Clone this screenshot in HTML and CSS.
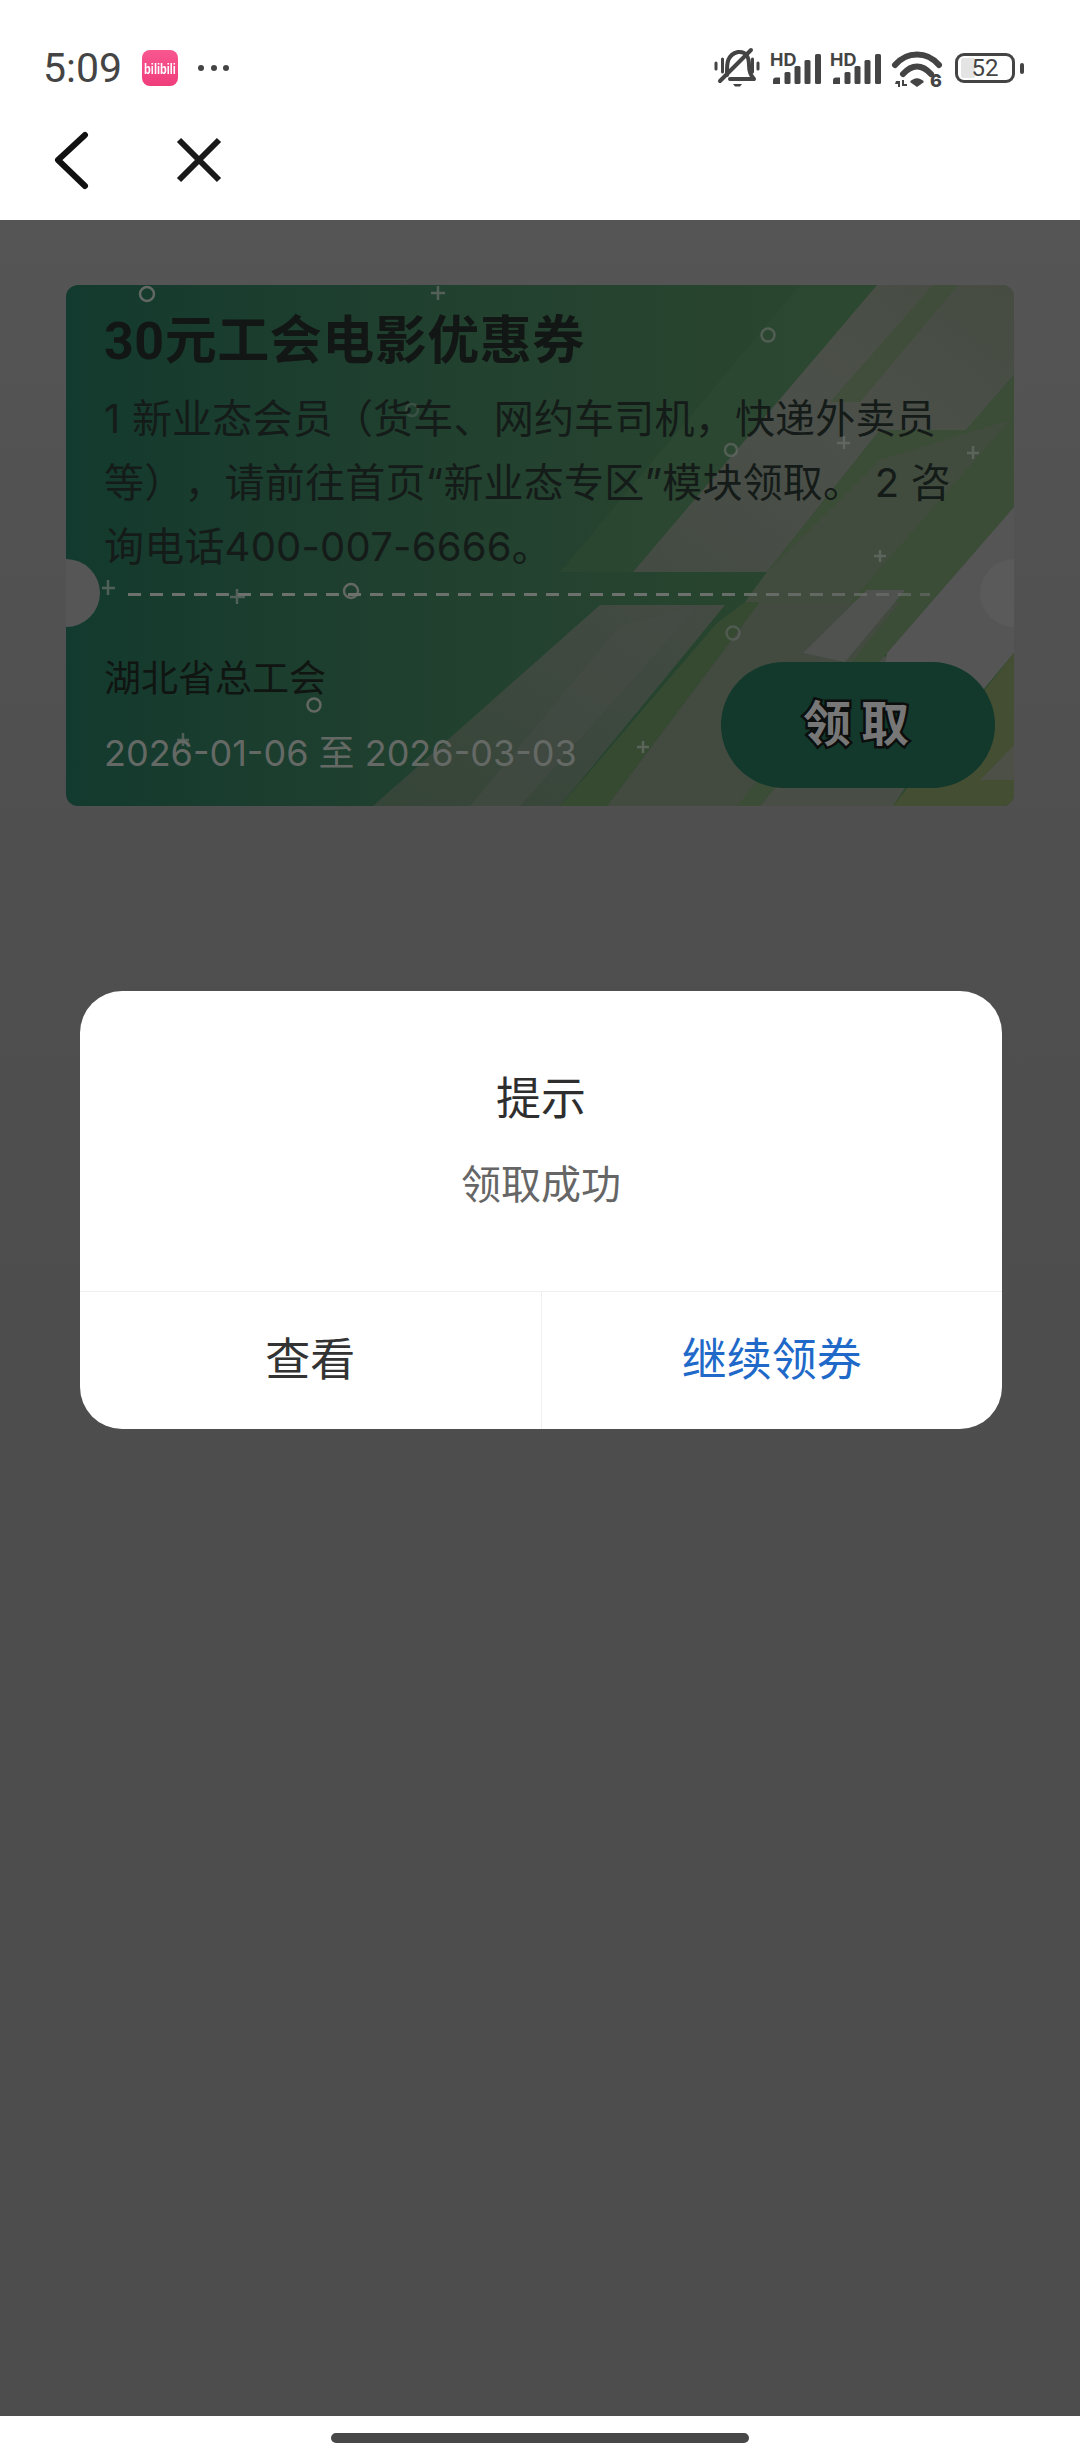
FILE: index.html
```html
<!DOCTYPE html>
<html lang="zh-CN">
<head>
<meta charset="utf-8">
<title>领取成功</title>
<link rel="stylesheet" href="styles.css">
</head>
<body>
<div class="page">
  <header class="top">
    <div class="status">
      <div class="status-left">
        <span class="time">5:09</span>
        <span class="app-icon"><span class="app-name">bilibili</span></span>
        <span class="dots"><i></i><i></i><i></i></span>
      </div>
      <div class="status-right">
        <svg class="ic-bell" viewBox="712 48 50 42">
          <path d="M727 76C727 66 726 56 738 53C746 52 749 58 749 66C749 73 751 77 754 80H730" fill="none" stroke="#444" stroke-width="4" stroke-linejoin="round" stroke-linecap="round"/>
          <path d="M720 82L751 51" stroke="#444" stroke-width="4" stroke-linecap="round"/>
          <path d="M733 85h9l-2 2.500h-5z" fill="#444"/>
          <path d="M716 64v6M722.500 60v13M752.500 60v13M758 64v6" stroke="#444" stroke-width="3" stroke-linecap="round"/>
        </svg>
        <svg class="ic-signal" viewBox="770 50 52 36">
          <text class="hd" x="770" y="66">HD</text>
          <path d="M773 80.500a3 3 0 0 1 3-3h4v6.500h-7z" fill="#444"/>
          <rect x="784.500" y="72" width="6" height="12" rx="1.500" fill="#444"/>
          <rect x="794.500" y="66" width="6" height="18" rx="1.500" fill="#444"/>
          <rect x="804.500" y="60" width="6" height="24" rx="1.500" fill="#444"/>
          <rect x="815" y="54" width="6" height="30" rx="1.500" fill="#444"/>
        </svg>
        <svg class="ic-signal" viewBox="770 50 52 36">
          <text class="hd" x="770" y="66">HD</text>
          <path d="M773 80.500a3 3 0 0 1 3-3h4v6.500h-7z" fill="#444"/>
          <rect x="784.500" y="72" width="6" height="12" rx="1.500" fill="#444"/>
          <rect x="794.500" y="66" width="6" height="18" rx="1.500" fill="#444"/>
          <rect x="804.500" y="60" width="6" height="24" rx="1.500" fill="#444"/>
          <rect x="815" y="54" width="6" height="30" rx="1.500" fill="#444"/>
        </svg>
        <svg class="ic-wifi" viewBox="892 48 50 40">
          <path d="M895 65C907 51 927 51 939 65" fill="none" stroke="#444" stroke-width="6" stroke-linecap="round"/>
          <path d="M903 74C912 64 922 64 931 74" fill="none" stroke="#444" stroke-width="6" stroke-linecap="round"/>
          <path d="M910 82C914 77 920 77 924 82L917 87z" fill="#444"/>
          <path d="M896 81h4v6h-2v-3h-3zM902 80h2v4h3v2h-5z" fill="#444"/>
          <text class="six" x="930" y="87">6</text>
        </svg>
        <div class="battery">
          <div class="battery-box"><span class="battery-fill"></span><span class="battery-num">52</span></div>
          <span class="battery-nub"></span>
        </div>
      </div>
    </div>
    <nav class="nav">
      <svg class="ic-back" viewBox="0 0 36 60"><path d="M31 5L4 30L31 56" fill="none" stroke="#111" stroke-width="6" stroke-linecap="round" stroke-linejoin="round"/></svg>
      <svg class="ic-close" viewBox="0 0 48 48"><path d="M4 4L44 44M44 4L4 44" fill="none" stroke="#1a1a1a" stroke-width="6"/></svg>
    </nav>
  </header>

  <main class="main">
    <section class="coupon">
      <svg class="coupon-art" viewBox="66 285 948 521" preserveAspectRatio="none">
        <defs>
          <linearGradient id="base" x1="0" y1="0" x2="1" y2="0">
            <stop offset="0" stop-color="#133a2e"/>
            <stop offset=".35" stop-color="#20402f"/>
            <stop offset=".75" stop-color="#29452f"/>
            <stop offset="1" stop-color="#2e4a2f"/>
          </linearGradient>
          <linearGradient id="greyA" x1="0" y1="1" x2="1" y2="0">
            <stop offset="0" stop-color="#434b42"/>
            <stop offset=".5" stop-color="#4c504a"/>
            <stop offset="1" stop-color="#464c42"/>
          </linearGradient>
          <linearGradient id="greyB" x1="0" y1="1" x2="1" y2="0">
            <stop offset="0" stop-color="#354538"/>
            <stop offset="1" stop-color="#444b43"/>
          </linearGradient>
        </defs>
        <rect x="66" y="285" width="948" height="521" fill="url(#base)"/>
        <polygon points="800,285 877,285 633,572 560,572" fill="#2f4933" opacity=".6"/>
        <polygon points="877,285 1014,285 1014,375 966,430 880,430 767,572 633,572" fill="url(#greyA)"/>
        <polygon points="933,285 958,285 860,402 830,402" fill="#3e4e38" opacity=".8"/>
        <polygon points="880,430 966,430 1014,375 1014,507 887,653 760,806 737,806 745,602 767,572" fill="#3c4d37"/>
        <polygon points="880,460 1010,420 905,540 830,625 745,602 767,572" fill="#414c3e"/>
        <polygon points="600,605 725,605 560,806 373,806" fill="url(#greyB)"/>
        <polygon points="470,806 620,625 700,605 520,806" fill="#464c45" opacity=".5"/>
        <polygon points="717,623 745,602 760,602 607,806 560,806" fill="#364a32"/>
        <polygon points="760,602 900,602 737,806 607,806" fill="#434b41"/>
        <polygon points="760,806 893,806 970,690 884,656" fill="#484e46"/>
        <polygon points="803,653 867,590 905,590 845,662" fill="#4f524f"/>
        <polygon points="887,653 1014,507 1014,653 983,690 880,690" fill="#545554"/>
        <polygon points="893,806 1014,653 1014,806" fill="#434e32"/>
        <polygon points="980,780 1014,745 1014,780" fill="#4d5046"/>
        <g fill="none" stroke="#636864" stroke-width="2.500">
          <circle cx="147" cy="294" r="7"/>
          <circle cx="768" cy="335" r="6.500" opacity=".7"/>
          <circle cx="731" cy="450" r="6" opacity=".7"/>
          <circle cx="412" cy="410" r="6" opacity=".4"/>
          <circle cx="351" cy="591" r="7"/>
          <circle cx="314" cy="705" r="6.500"/>
          <circle cx="733" cy="633" r="6.500" opacity=".6"/>
        </g>
        <g stroke="#6a6f6a" stroke-width="2.500" opacity=".7">
          <path d="M431 293h14M438 286v14"/>
          <path d="M102 588h13M108 580v15"/>
          <path d="M230 597h15M237 589v15"/>
          <path d="M837 443h13M844 436v13"/>
          <path d="M967 453h12M973 446v13"/>
          <path d="M874 556h12M880 550v12"/>
          <path d="M637 747h12M643 741v12"/>
          <path d="M177 740h12M183 733v13"/>
        </g>
      </svg>
      <span class="notch notch-left"></span>
      <span class="notch notch-right"></span>
      <div class="coupon-head">
        <h1 class="coupon-title">30元工会电影优惠券</h1>
        <p class="coupon-desc">1 新业态会员（货车、网约车司机，快递外卖员等），请前往首页“新业态专区”模块领取。 2 咨询电话400-007-6666。</p>
      </div>
      <div class="dash"></div>
      <div class="coupon-foot">
        <div class="coupon-meta">
          <div class="coupon-org">湖北省总工会</div>
          <div class="coupon-date">2026-01-06 至 2026-03-03</div>
        </div>
        <button class="coupon-btn">领取</button>
      </div>
    </section>

    <section class="dialog">
      <div class="dialog-body">
        <div class="dialog-title">提示</div>
        <div class="dialog-text">领取成功</div>
      </div>
      <div class="dialog-actions">
        <div class="dialog-action">查看</div>
        <div class="dialog-action dialog-action-primary">继续领券</div>
      </div>
    </section>
  </main>

  <footer class="home"><span class="home-bar"></span></footer>
</div>
</body>
</html>
```

FILE: styles.css
```css
* { box-sizing: border-box; }
html, body { margin: 0; padding: 0; }
body {
  width: 1080px;
  height: 2460px;
  overflow: hidden;
  background: #fff;
  font-family: Roboto, "Noto Sans CJK SC", sans-serif;
  text-spacing-trim: space-all;
}
.page { display: flex; flex-direction: column; height: 2460px; }

.top { height: 220px; background: #fff; }
.status {
  height: 112px;
  padding: 24px 56px 0 43px;
  display: flex;
  justify-content: space-between;
  align-items: center;
}
.status-left { display: flex; align-items: center; gap: 20px; }
.time { font-size: 41px; line-height: 44px; color: #444; width: 79px; }
.app-icon {
  width: 36px;
  height: 36px;
  border-radius: 8px;
  background: linear-gradient(180deg, #f8578f, #ef3d7b);
  display: flex;
  align-items: center;
  justify-content: center;
}
.app-name {
  font-family: "Liberation Sans", sans-serif;
  font-size: 11px;
  font-weight: 700;
  color: #fff;
  line-height: 12px;
  transform: scaleY(1.4);
}
.dots { display: flex; gap: 6.500px; }
.dots i { width: 6px; height: 6px; border-radius: 50%; background: #444; }

.status-right { display: flex; align-items: center; gap: 8px; }
.status-right svg { display: block; overflow: visible; }
.ic-bell { width: 50px; height: 42px; }
.ic-signal { width: 52px; height: 36px; }
.ic-wifi { width: 50px; height: 40px; margin-left: 2px; margin-right: 5px; }
.hd { font-family: Inter, sans-serif; font-size: 18px; font-weight: 700; fill: #444; }
.six { font-family: Inter, sans-serif; font-size: 18px; font-weight: 800; fill: #444; }
.battery { display: flex; align-items: center; gap: 5px; }
.battery-box {
  position: relative;
  width: 60px;
  height: 30px;
  border: 3.500px solid #444;
  border-radius: 9px;
  display: flex;
  align-items: center;
  justify-content: center;
}
.battery-fill {
  position: absolute;
  left: 3px;
  top: 2px;
  bottom: 2px;
  width: 14px;
  background: #e4e4e4;
  border-radius: 2px;
}
.battery-num { position: relative; font-size: 24px; line-height: 24px; color: #444; }
.battery-nub { width: 4px; height: 11px; border-radius: 2px; background: #444; }

.nav { display: flex; align-items: center; padding: 18px 0 0 54px; gap: 85px; }
.ic-back { width: 36px; height: 60px; display: block; }
.ic-close { width: 48px; height: 48px; display: block; }

.main {
  flex: 1;
  background: linear-gradient(180deg, #555 0, #505050 500px, #4e4e4e 900px, #4d4d4d 1400px);
  padding-top: 65px;
}

.coupon {
  position: relative;
  margin-left: 66px;
  width: 948px;
  height: 521px;
  border-radius: 12px;
  overflow: hidden;
}
.coupon-art { position: absolute; inset: 0; width: 100%; height: 100%; display: block; }
.notch {
  position: absolute;
  top: 274px;
  width: 68px;
  height: 68px;
  border-radius: 50%;
  background: #565656;
}
.notch-left { left: -34px; }
.notch-right { right: -34px; background: #5a5a5a; }
.coupon-head { position: relative; padding: 25px 40px 0 38px; }
.coupon-title {
  margin: 0;
  font-size: 52px;
  line-height: 64px;
  font-weight: 700;
  letter-spacing: .5px;
  color: #121614;
}
.coupon-desc {
  margin: 13px 0 0;
  font-family: Inter, "Noto Sans CJK SC", sans-serif;
  font-size: 40px;
  line-height: 64px;
  letter-spacing: .2px;
  color: #141b18;
}
.dash {
  position: relative;
  height: 3px;
  margin: 14px 84px 0 62px;
  background: repeating-linear-gradient(90deg, #6d716d 0, #6d716d 13px, transparent 13px, transparent 22px);
  -webkit-mask-image: linear-gradient(90deg, #000 70%, rgba(0,0,0,.55) 100%);
  mask-image: linear-gradient(90deg, #000 70%, rgba(0,0,0,.55) 100%);
}
.coupon-foot {
  position: relative;
  display: flex;
  justify-content: space-between;
  padding: 0 19px 0 38px;
}
.coupon-meta { padding-top: 59px; }
.coupon-org { font-size: 37px; line-height: 50px; color: #101512; }
.coupon-date {
  margin-top: 23px;
  font-family: Inter, "Noto Sans CJK SC", sans-serif;
  font-size: 36px;
  line-height: 50px;
  color: #656965;
  white-space: nowrap;
}
.coupon-btn {
  margin: 66px 0 0;
  width: 274px;
  height: 126px;
  border: 0;
  padding: 0 0 0 6px;
  border-radius: 63px;
  background: #12392c;
  font-family: inherit;
  font-size: 48px;
  font-weight: 700;
  line-height: 48px;
  letter-spacing: 10px;
  color: #777;
  -webkit-text-stroke: 5px #0b0e0d;
  paint-order: stroke fill;
}

.dialog {
  margin: 185px 0 0 80px;
  width: 922px;
  height: 438px;
  background: #fff;
  border-radius: 42px;
  overflow: hidden;
  display: flex;
  flex-direction: column;
}
.dialog-body { height: 301px; padding-top: 79px; text-align: center; border-bottom: 1px solid #efefef; }
.dialog-title { font-size: 45px; line-height: 60px; color: #2e2e2e; }
.dialog-text { margin-top: 28px; font-size: 40px; line-height: 56px; color: #666; }
.dialog-actions { flex: 1; display: flex; }
.dialog-action {
  flex: 1;
  padding-bottom: 9px;
  display: flex;
  align-items: center;
  justify-content: center;
  font-size: 45px;
  color: #333;
}
.dialog-action + .dialog-action { border-left: 1px solid #efefef; }
.dialog-action-primary { color: #2069c9; }

.home { height: 44px; background: #fff; padding-top: 17px; display: flex; justify-content: center; align-items: flex-start; }
.home-bar { width: 418px; height: 10px; border-radius: 5px; background: #484848; }
```
